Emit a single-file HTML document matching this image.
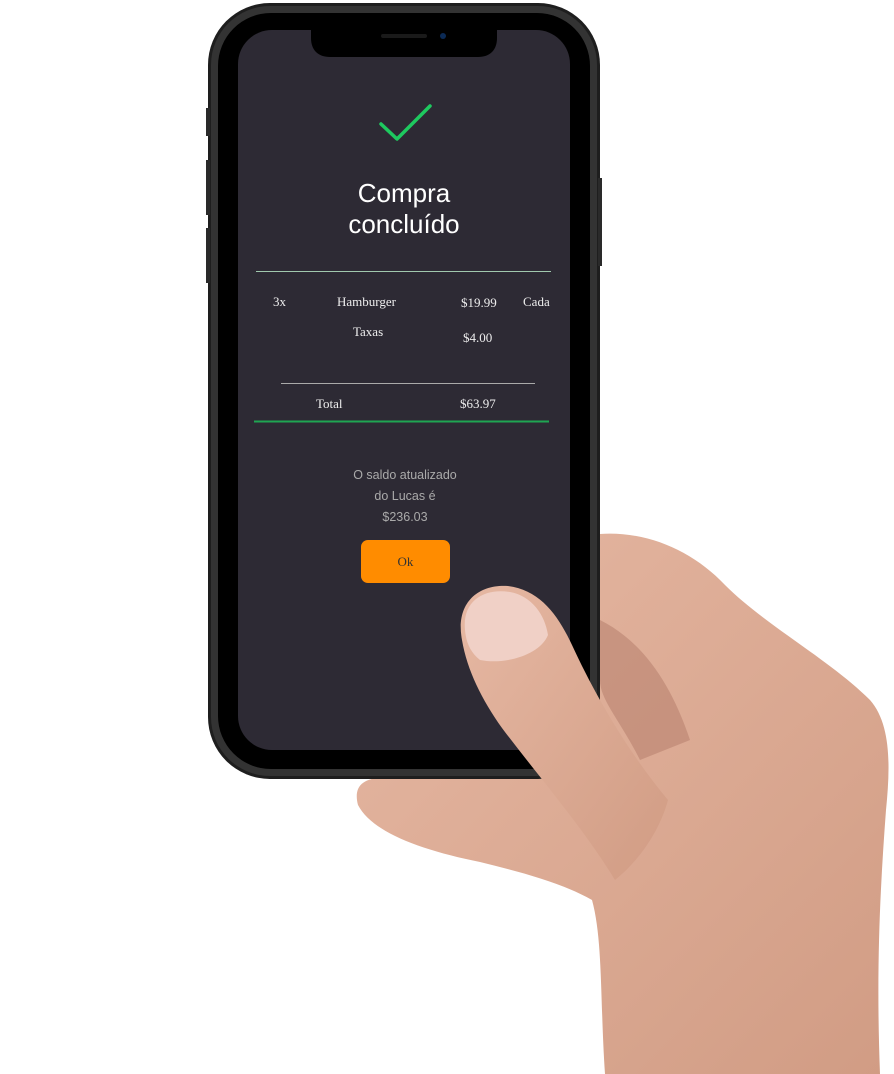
<!DOCTYPE html>
<html><head><meta charset="utf-8"><style>
body{margin:0;width:894px;height:1074px;background:#fff;position:relative;overflow:hidden;font-family:"Liberation Sans",sans-serif}
.a{position:absolute}
.s{font-family:"Liberation Serif",serif;color:#eee;font-size:13px}
</style></head><body>
<svg class="a" style="left:0;top:0" width="894" height="1074">
<defs>
<linearGradient id="sk" x1="0" y1="0" x2="1" y2="1"><stop offset="0" stop-color="#e6b8a3"/><stop offset="1" stop-color="#d19c84"/></linearGradient>
</defs>
<path d="M590,535 C640,528 690,548 725,585 C765,625 830,660 870,700 C892,725 890,770 886,810 C880,890 876,970 880,1074 L605,1074 C600,1000 603,940 592,900 C560,882 520,872 480,862 C420,850 372,832 358,805 C352,782 368,775 400,778 L600,778 Z" fill="url(#sk)"/>
<path d="M600,620 C640,640 670,680 690,740 L640,760 C620,720 600,700 600,680 Z" fill="#b98270" opacity=".6"/>
<!-- phone -->
<rect x="208" y="3" width="392" height="776" rx="62" fill="#1e1e1e"/>
<rect x="211" y="6" width="386" height="770" rx="59" fill="#333"/>
<rect x="218" y="13" width="372" height="756" rx="53" fill="#000"/>
<rect x="206" y="108" width="4" height="28" fill="#2a2a2a"/>
<rect x="206" y="160" width="4" height="55" fill="#2a2a2a"/>
<rect x="206" y="228" width="4" height="55" fill="#2a2a2a"/>
<rect x="598" y="178" width="4" height="88" fill="#2a2a2a"/>
<rect x="238" y="30" width="332" height="720" rx="34" fill="#2d2a34"/>
<path d="M311,30 L497,30 L497,38 C497,50 490,57 478,57 L330,57 C318,57 311,50 311,38 Z" fill="#000"/>
<rect x="381" y="34" width="46" height="4" rx="2" fill="#1a1a1a"/>
<circle cx="443" cy="36" r="3" fill="#0b2a55"/>
<path d="M381,124 L397,139 L430,106" stroke="#1ec95f" stroke-width="3.5" fill="none" stroke-linecap="round" stroke-linejoin="round"/>
<line x1="256" y1="271.5" x2="551" y2="271.5" stroke="#a0c8ae" stroke-width="1"/>
<line x1="281" y1="383.5" x2="535" y2="383.5" stroke="#aaa" stroke-width="1"/>
<line x1="254" y1="421.5" x2="549" y2="421.5" stroke="#1fa552" stroke-width="2"/>
<rect x="361" y="540" width="89" height="43" rx="7" fill="#ff8c00"/>
<!-- thumb -->
<path d="M462,640 C455,603 478,584 508,586 C540,590 558,615 572,645 C595,695 628,752 668,800 C660,830 640,860 615,880 C585,830 535,772 502,728 C482,700 467,670 462,640 Z" fill="url(#sk)"/>
<path d="M465,630 C462,600 485,588 510,592 C532,596 545,615 548,635 C540,655 505,665 480,660 C470,652 466,642 465,630 Z" fill="#f0d0c6"/>
</svg>
<div class="a" style="left:304px;top:178px;width:200px;text-align:center;color:#fff;font-size:26px;line-height:31px">Compra<br>concluído</div>
<div class="a s" style="left:273px;top:294px">3x</div>
<div class="a s" style="left:337px;top:294px">Hamburger</div>
<div class="a s" style="left:461px;top:295px">$19.99</div>
<div class="a s" style="left:523px;top:294px">Cada</div>
<div class="a s" style="left:353px;top:324px">Taxas</div>
<div class="a s" style="left:463px;top:330px">$4.00</div>
<div class="a s" style="left:316px;top:396px">Total</div>
<div class="a s" style="left:460px;top:396px">$63.97</div>
<div class="a" style="left:330px;top:465px;width:150px;text-align:center;color:#aaa;font-size:12.5px;line-height:21px">O saldo atualizado<br>do Lucas é<br>$236.03</div>
<div class="a s" style="left:361px;top:554px;width:89px;text-align:center;color:#333">Ok</div>
</body></html>
